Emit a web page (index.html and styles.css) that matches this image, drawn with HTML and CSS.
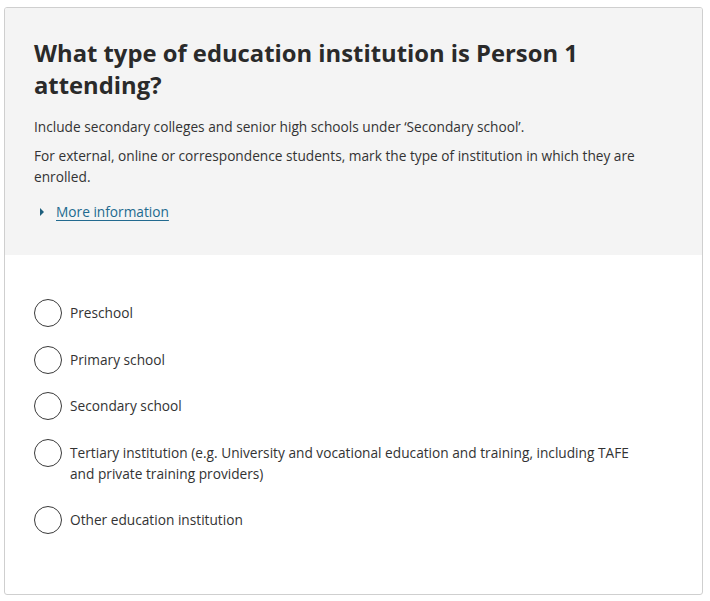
FILE: index.html
```html
<!DOCTYPE html>
<html lang="en">
<head>
<meta charset="utf-8">
<title>Education institution</title>
<link rel="stylesheet" href="styles.css">
</head>
<body>
<div class="card">
  <div class="question">
    <h1 class="title">What type of education institution is Person 1 attending?</h1>
    <p class="hint">Include secondary colleges and senior high schools under ‘Secondary school’.</p>
    <p class="hint">For external, online or correspondence students, mark the type of institution in which they are enrolled.</p>
    <div class="more">
      <span class="caret"></span>
      <a class="more-link" href="#">More information</a>
    </div>
  </div>
  <div class="options">
    <label class="option"><span class="radio"></span><span class="label">Preschool</span></label>
    <label class="option"><span class="radio"></span><span class="label">Primary school</span></label>
    <label class="option"><span class="radio"></span><span class="label">Secondary school</span></label>
    <label class="option"><span class="radio"></span><span class="label">Tertiary institution (e.g. University and vocational education and training, including TAFE and private training providers)</span></label>
    <label class="option"><span class="radio"></span><span class="label">Other education institution</span></label>
  </div>
</div>
</body>
</html>
```
FILE: styles.css
```css
html, body {
  background: #fff;
}
body {
  margin: 7px 7px 6px 4px;
  font-family: "Open Sans", "Noto Sans", sans-serif;
  color: #333;
}
.card {
  border: 1px solid #cfcfcf;
  border-radius: 3px;
  height: 588px;
  box-sizing: border-box;
  overflow: hidden;
}
.question {
  background: #f4f4f4;
  padding: 29px 29px 33px 29px;
  height: 247px;
  box-sizing: border-box;
}
.title {
  margin: 0 0 15px;
  font-size: 23.8px;
  line-height: 32px;
  font-weight: 700;
  color: #2a2a2a;
}
.hint {
  margin: 0 0 8px;
  font-size: 13.7px;
  line-height: 21px;
}
.more {
  display: flex;
  align-items: center;
  gap: 12px;
  margin-top: 14px;
  padding-left: 6px;
  font-size: 13.7px;
  line-height: 21px;
}
.caret {
  width: 0;
  height: 0;
  border-top: 4px solid transparent;
  border-bottom: 4px solid transparent;
  border-left: 4px solid #1d5f7d;
}
.more-link {
  color: #226a8f;
  text-decoration: underline;
  text-underline-offset: 3px;
}
.options {
  padding: 44px 29px 0;
  display: flex;
  flex-direction: column;
  gap: 18.5px;
}
.option {
  display: flex;
  align-items: flex-start;
  gap: 8px;
}
.radio {
  flex: none;
  width: 28px;
  height: 28px;
  box-sizing: border-box;
  border: 1.5px solid #3a3a3a;
  border-radius: 50%;
}
.label {
  max-width: 570px;
  padding: 3px 0 4px;
  font-size: 13.7px;
  line-height: 21px;
}
```
